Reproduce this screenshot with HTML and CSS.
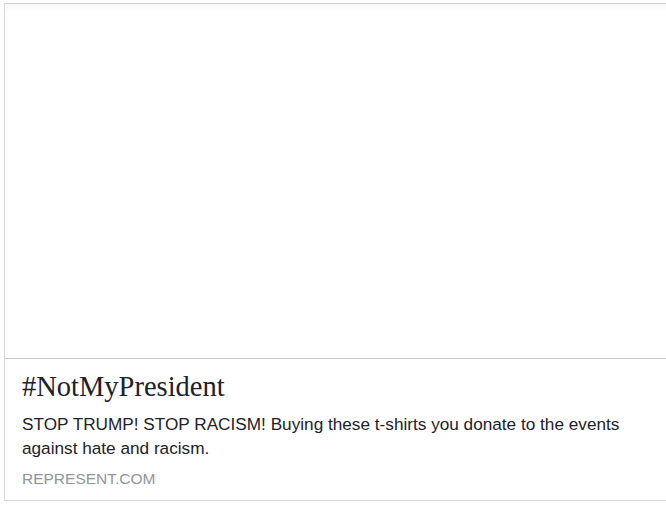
FILE: index.html
```html
<!DOCTYPE html>
<html>
<head>
<meta charset="utf-8">
<link rel="stylesheet" href="styles.css">
</head>
<body>
<div class="card">
  <div class="media"></div>
  <div class="info">
    <div class="title">#NotMyPresident</div>
    <div class="desc">STOP TRUMP! STOP RACISM! Buying these t-shirts you donate to the events against hate and racism.</div>
    <div class="domain">REPRESENT.COM</div>
  </div>
</div>
</body>
</html>
```
FILE: styles.css
```css
html, body {
  margin: 0;
  padding: 0;
  background: #ffffff;
  overflow: hidden;
}
body {
  width: 666px;
  height: 506px;
}
.card {
  margin: 3px 0 0 4px;
  width: 680px;
  border: 1px solid #d6d7da;
  border-top-color: #cfd0d2;
  box-sizing: border-box;
  background: #fff;
}
.media {
  height: 354px;
  background: linear-gradient(#f6f7f8, #ffffff 8px);
  border-bottom: 1px solid #c9cacc;
}
.info {
  padding: 12px 16px 11px 17px;
}
.title {
  font-family: "Liberation Serif", Georgia, serif;
  font-size: 28.5px;
  line-height: 32px;
  color: #1d2129;
}
.desc {
  margin-top: 10px;
  width: 610px;
  font-family: "Liberation Sans", Arial, sans-serif;
  font-size: 17.2px;
  line-height: 23.5px;
  color: #1d2129;
}
.domain {
  margin-top: 9px;
  font-family: "Liberation Sans", Arial, sans-serif;
  font-size: 15.5px;
  line-height: 20px;
  color: #90949c;
}
```
